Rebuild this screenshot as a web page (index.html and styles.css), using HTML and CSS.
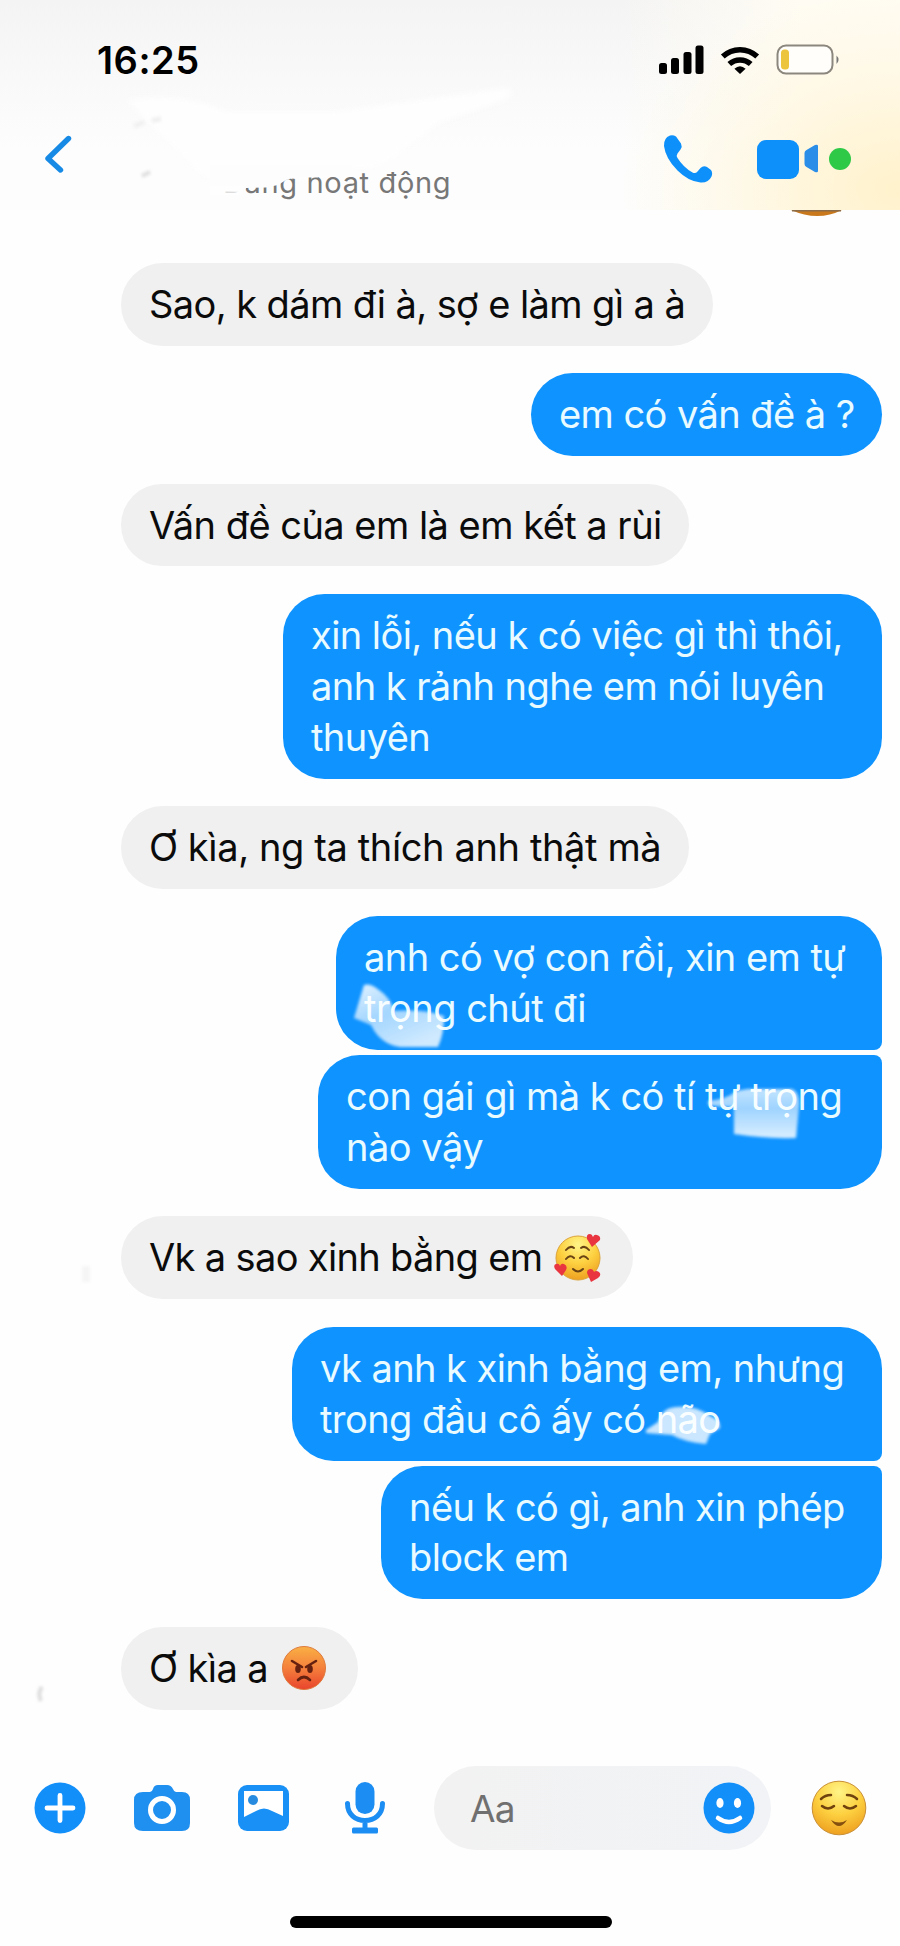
FILE: index.html
```html
<!DOCTYPE html>
<html lang="vi">
<head>
<meta charset="utf-8">
<title>Chat</title>
<link rel="stylesheet" href="styles.css">
</head>
<body>
<div class="phone">
  <header class="header">
    <div class="status">
      <span class="time">16:25</span>
      <svg class="signal" width="46" height="32" viewBox="658 44 46 32"><rect x="659" y="63" width="8" height="11" rx="2.5"/><rect x="671" y="58" width="8" height="16" rx="2.5"/><rect x="683.500" y="52" width="8" height="22" rx="2.500"/><rect x="695.500" y="45.500" width="8" height="28.500" rx="2.500"/></svg>
      <svg class="wifi" width="40" height="32" viewBox="720 44 40 32"><g fill="none" stroke="#000" stroke-width="5.500"><path d="M722.800 56.500a25 25 0 0 1 34.400 0"/><path d="M729.300 64a16 16 0 0 1 21.400 0"/></g><path d="M740 74l-5.600-5.300q5.600-5 11.200 0z"/></svg>
      <svg class="battery" width="66" height="32" viewBox="776 44 66 32"><rect x="777.500" y="45.500" width="55" height="28" rx="8.500" fill="#fffefa" stroke="#8c877e" stroke-width="2"/><rect x="781" y="49.500" width="8" height="20" rx="3.500" fill="#ecc53c"/><path d="M836.500 55.500q4 4 0 8.500z" fill="#777"/></svg>
    </div>
    <div class="nav">
      <svg class="back" width="28" height="40" viewBox="45 134 28 40"><path d="M68.500 138.500L48 158.500 60.500 170" fill="none" stroke="#178ae6" stroke-width="5.400" stroke-linecap="round" stroke-linejoin="round"/></svg>
      <div class="contact">
        <svg class="contact-wipe" width="430" height="130" viewBox="100 84 430 130"><path d="M126 100q60-8 100 12l110 0 170-24q16 4-6 14l-60 20-50 38-20 8h-20l-10 4-24 6-30 4-80-4z" fill="#fefefe"/></svg>
        <svg class="contact-wipe marks" width="430" height="130" viewBox="100 84 430 130"><path d="M134 126q6-2 10-4M152 121q4-2 9-2" fill="none" stroke="#f0f0f0" stroke-width="5"/><path d="M142 176l8-4" fill="none" stroke="#dedede" stroke-width="4"/></svg>
        <span class="presence">Đang hoạt động</span>
        <svg class="presence-wipe" width="170" height="30" viewBox="210 165 170 30"><path d="M210 165H352V176H318V177.500H299V180Q292 177 286 180L278 185 266 187.500 246 188 244 192 210 191z" fill="#fdfdfd"/><path d="M210 186h33v9h-33z" fill="#fdfdfd" fill-opacity=".75"/></svg>
      </div>
      <svg class="call" width="52" height="52" viewBox="662 133 52 52"><path d="M670 135.500q3-1 6 1l5 7q1.500 3-.5 6l-3 4q-1.500 2 0 4.500 6 9.500 15 14.500 3 1.500 5-1l3-3.500q3-3 6.500-1l4 3q2 3 .5 6.500-3 6.500-11 6-12-1-23-12-12-12-13.500-24.500-.500-8 6-10.500z" fill="#0e90fb"/></svg>
      <svg class="video" width="100" height="48" viewBox="755 135 100 48"><rect x="757" y="140" width="42" height="39" rx="9" fill="#0e90fb"/><path d="M804.500 153q0-2 2-3l8.500-5q3-1 3 1v25q0 2-3 1l-8.500-5q-2-1-2-3z" fill="#2a8ee8"/><circle cx="840" cy="159" r="11" fill="#2fc948"/></svg>
    </div>
  </header>
  <main class="chat">
    <svg class="previous" width="54" height="8" viewBox="790 210 54 8"><path d="M791 210h51q-24 12-51 0z" fill="#c9791c"/><path d="M792 210.800h49" stroke="#8c6c48" stroke-width="1.600"/></svg>
    <svg class="avatar-marks" width="60" height="470" viewBox="30 1255 60 470"><path d="M86 1266v16" stroke="#f5f5f5" stroke-width="8"/><path d="M42 1687q-5 6-1 14" fill="none" stroke="#dcdcdc" stroke-width="4"/></svg>
    <div class="msg in m1">Sao, k dám đi à, sợ e làm gì a à</div>
    <div class="msg out m2">em có vấn đề à ?</div>
    <div class="msg in m3">Vấn đề của em là em kết a rùi</div>
    <div class="msg out m4">xin lỗi, nếu k có việc gì thì thôi,<br>anh k rảnh nghe em nói luyên<br>thuyên</div>
    <div class="msg in m5">Ơ kìa, ng ta thích anh thật mà</div>
    <div class="group">
      <div class="msg out first m6">anh có vợ con rồi, xin em tự<br>trọng chút đi
        <svg class="smudge s6" width="96" height="78" viewBox="352 972 96 78"><defs><linearGradient id="a" x2=".6" y2="1"><stop offset="0" stop-color="#fff" stop-opacity=".88"/><stop offset=".5" stop-color="#fff" stop-opacity=".62"/><stop offset="1" stop-color="#fff" stop-opacity=".8"/></linearGradient></defs><path d="M364 985q6-2 15 5 12 8 15 21 30-2 50 5 0 18-6 31H400q-20-3-29-22l-17-7z" fill="url(#a)"/></svg>
      </div>
      <div class="msg out last m7">con gái gì mà k có tí tự trọng<br>nào vậy
        <svg class="smudge s7" width="96" height="56" viewBox="706 1084 96 56"><defs><linearGradient id="b" x2="0" y2="1"><stop offset="0" stop-color="#fff" stop-opacity=".75"/><stop offset=".4" stop-color="#fff" stop-opacity=".6"/><stop offset="1" stop-color="#fff" stop-opacity=".85"/></linearGradient></defs><path d="M708 1101q20-2 28-10l12-2h44q8 3 7 18l-3 31q-30 1-62-4v-27q-14 0-26-2z" fill="url(#b)"/></svg>
      </div>
    </div>
    <div class="msg in m8"><span>Vk a sao xinh bằng em</span>
      <svg class="emoji" width="50" height="50" viewBox="0 0 50 50"><defs><radialGradient id="y" cx=".5" cy=".2" r=".85"><stop offset="0" stop-color="#fff487"/><stop offset=".5" stop-color="#fdd040"/><stop offset="1" stop-color="#ec9a1c"/></radialGradient></defs><circle cx="24" cy="25" r="22" fill="url(#y)" stroke="#dca43b"/><g fill="none" stroke="#6a4315" stroke-width="2" stroke-linecap="round"><path d="M12 17q4-5 8-2M27 15q4-3 8 2M12 26q4-5 8-1M26 25q4-4 8 1M19 36q5 5 10 0"/></g><g fill="#e8353f"><path d="M38 14l-5-8q-1-5 3-5 2 0 3 3 1-3 4-2 4 1 3 5z"/><path d="M8 43l-7-7q-2-4 1-5 3-1 4 2 1-3 4-2 4 2 2 6z"/><path d="M37 49l-4-9q0-4 4-4 2 0 3 3 2-2 5 0 3 3-1 6z"/></g></svg>
    </div>
    <div class="group">
      <div class="msg out first m9">vk anh k xinh bằng em, nhưng<br>trong đầu cô ấy có não
        <svg class="smudge s9" width="80" height="46" viewBox="644 1400 80 46"><path d="M646 1430l12-8q4-14 18-15 20-2 34 9 11 4 10 12l-10 6-4 10q-22-2-34-9l-26-2z" fill="#fff" fill-opacity=".78"/></svg>
      </div>
      <div class="msg out last m10">nếu k có gì, anh xin phép<br>block em</div>
    </div>
    <div class="msg in m11"><span>Ơ kìa a</span>
      <svg class="emoji" width="46" height="46" viewBox="0 0 46 46"><defs><linearGradient id="r" x2="0" y2="1"><stop offset="0" stop-color="#f9b044"/><stop offset=".5" stop-color="#f5803c"/><stop offset="1" stop-color="#e8442c"/></linearGradient></defs><circle cx="23" cy="23" r="21.500" fill="url(#r)" stroke="#df7a3c"/><path d="M11 16l10 6M35 16l-10 6M17 35q6-6 12 0" fill="none" stroke="#66200f" stroke-width="2.600" stroke-linecap="round"/><ellipse cx="17" cy="24" rx="2.800" ry="4" fill="#66200f"/><ellipse cx="29" cy="24" rx="2.800" ry="4" fill="#66200f"/></svg>
    </div>
  </main>
  <footer class="composer">
    <svg width="52" height="52" viewBox="0 0 52 52"><circle cx="26" cy="26" r="25.500" fill="#138ffa"/><path d="M26 13.500v25M13 26h26" stroke="#fff" stroke-width="4.800" stroke-linecap="round"/></svg>
    <svg class="camera" width="56" height="47" viewBox="134 1785 56 47"><path d="M143 1792h7q2 0 3-3 1-4 5-4h9q4 0 6 4 1 3 3 3h6q8 0 8 8v23q0 8-8 8h-39q-9 0-9-8v-23q0-8 9-8z" fill="#1f8ff0"/><circle cx="162" cy="1810" r="11.500" fill="none" stroke="#fff" stroke-width="5"/></svg>
    <svg class="photo" width="51" height="47" viewBox="238 1785 51 47"><rect x="238" y="1785" width="51" height="46" rx="9" fill="#1990f5"/><path d="M244 1791h39v25l-11-5q-8-5-16 0l-12 6z" fill="#fff"/><circle cx="253" cy="1800" r="5" fill="#278cdf"/></svg>
    <svg class="mic" width="40" height="52" viewBox="345 1782 40 52"><rect x="355.500" y="1782" width="19" height="32" rx="9.500" fill="#1c8df2"/><path d="M347.500 1803.500c0 11 8 17 17.500 17s17.500-6 17.500-17M365 1821v9" fill="none" stroke="#1c8df2" stroke-width="5" stroke-linecap="round"/><rect x="352" y="1827.500" width="26" height="6" rx="1.500" fill="#1c8df2"/></svg>
    <div class="field"><span>Aa</span>
      <svg width="52" height="52" viewBox="0 0 52 52"><circle cx="26" cy="26" r="25.500" fill="#138ffa"/><ellipse cx="17" cy="21" rx="3.600" ry="5" fill="#fff"/><ellipse cx="34.500" cy="21" rx="3.600" ry="5" fill="#fff"/><path d="M15 36q11 8 22 0" fill="none" stroke="#fff" stroke-width="4.500" stroke-linecap="round"/></svg>
    </div>
    <svg class="quick" width="56" height="56" viewBox="0 0 56 56"><circle cx="28" cy="28" r="26.800" fill="url(#y)" stroke="#c98f35"/><g fill="none" stroke="#70420d" stroke-width="2.500" stroke-linecap="round"><path d="M10 19q4-4 10-4M36 15q6 0 10 4M11 26q6 5 12 0M33 26q6 5 12 0"/></g><path d="M20 40q8 5 16 0-8 12-16 0z" fill="#85500f"/></svg>
  </footer>
  <div class="home"></div>
</div>
</body>
</html>
```
FILE: styles.css
```css
* { box-sizing: border-box; }
body { margin: 0; background: #fff; font-family: Inter, "Noto Sans", sans-serif; color: #0b0b0c; }
svg { display: block; flex: none; }
.phone { width: 900px; height: 1946px; display: flex; flex-direction: column; overflow: hidden; background: #fefefe; }

.header {
  height: 210px;
  flex: none;
  background:
    radial-gradient(ellipse 280px 200px at 900px 190px, rgba(255,238,190,.75), rgba(255,244,214,.4) 60%, rgba(255,250,236,0)),
    linear-gradient(to right, rgba(255,252,242,0) 620px, #fffcf3 800px),
    linear-gradient(#f4f4f4, #f9f9f9 80px, #fdfdfd 150px);
}
.status { display: flex; align-items: flex-start; height: 118px; padding: 44px 58px 0 97px; }
.time { flex: 1; font-size: 38px; font-weight: 600; line-height: 32px; letter-spacing: .5px; color: #000; }
.wifi { margin-left: 16px; }
.battery { margin-left: 16px; }
.nav { display: flex; align-items: flex-start; height: 92px; padding: 0 45px 0 45px; }
.back { margin-top: 16px; }
.contact { position: relative; flex: 1; padding: 48px 0 0 150px; }
.presence { position: relative; display: block; font-size: 29px; line-height: 34px; letter-spacing: .65px; color: #777; white-space: nowrap; }
.contact-wipe { position: absolute; left: 27px; top: -34px; filter: blur(3px); }
.marks { filter: blur(1.5px); }
.presence-wipe { position: absolute; left: 137px; top: 47px; }
.call { margin-top: 15px; }
.video { margin: 17px 0 0 41px; }

.chat { position: relative; flex: none; display: flex; flex-direction: column; gap: 27.5px; height: 1556px; padding: 52.75px 18px 0 121px; }
.previous { position: absolute; left: 790px; top: 0; }
.avatar-marks { position: absolute; left: 30px; top: 1045px; filter: blur(1.5px); }
.msg { position: relative; padding: 16px 28px; border-radius: 41.5px; font-size: 38px; line-height: 50.875px; white-space: nowrap; letter-spacing: -.56px; }
.in { align-self: flex-start; display: flex; background: #f0f0f0; }
.out { align-self: flex-end; background: #0f93ff; color: #e9fbff; }
.group { display: flex; flex-direction: column; gap: 5px; }
.first { border-bottom-right-radius: 8px; }
.last { border-top-right-radius: 8px; }
.m1 { width: 592px; letter-spacing: -.59px; }
.m2 { width: 351px; }
.m3 { width: 568px; letter-spacing: -.52px; }
.m4 { width: 599px; }
.m5 { width: 568px; letter-spacing: -.38px; }
.m6 { width: 546px; letter-spacing: -.53px; }
.m7 { width: 564px; letter-spacing: -.49px; }
.m8 { width: 512px; letter-spacing: -.65px; }
.m9 { width: 590px; }
.m10 { width: 501px; }
.m11 { width: 237px; }
.emoji { position: absolute; right: 29px; top: 17px; }
.m11 .emoji { right: 31px; top: 18px; }
.smudge { position: absolute; filter: blur(1.5px); }
.s6 { left: 16px; top: 56px; }
.s7 { left: 388px; top: 29px; }
.s9 { left: 352px; top: 73px; }

.composer { display: flex; align-items: center; height: 84px; padding: 0 33px 0 34px; }
.camera { margin-left: 48px; }
.photo { margin-left: 48px; }
.mic { margin-left: 56px; }
.field { display: flex; align-items: center; justify-content: space-between; width: 337px; height: 84px; margin-left: 49px; padding: 0 16px 0 36px; border-radius: 42px; background: linear-gradient(to right, #f2f2f2, #f1f3f6); font-size: 37px; letter-spacing: -.8px; color: #707070; }
.quick { margin-left: 40px; }
.home { width: 322px; height: 12px; margin: 66px 0 0 290px; border-radius: 6px; background: #000; }
```
